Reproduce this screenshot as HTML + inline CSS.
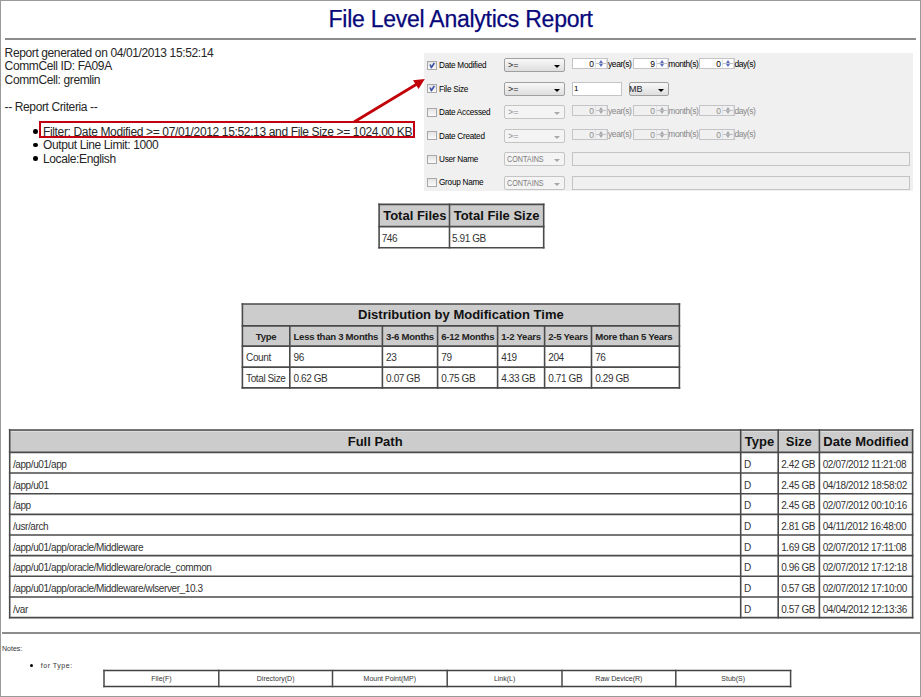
<!DOCTYPE html>
<html><head><meta charset="utf-8">
<style>
*{margin:0;padding:0;box-sizing:border-box}
html,body{width:921px;height:697px;overflow:hidden;background:#fff}
body{position:relative;font-family:"Liberation Sans",sans-serif;color:#1a1a1a}
.a{position:absolute;white-space:nowrap}
#frame{position:absolute;left:0;top:0;width:921px;height:697px;border:1px solid #9a9a9a}
#title{left:328.5px;top:6px;font-size:23px;line-height:26px;letter-spacing:-0.25px;color:#08087a;-webkit-text-stroke:0.25px #08087a}
.hr{position:absolute;background:#8c8c8c;height:2px}
.t12{font-size:12px;line-height:14px;letter-spacing:-0.38px;color:#262626}
.bul{position:absolute;width:5px;height:5px;border-radius:50%;background:#000}
#redbox{position:absolute;left:39px;top:121px;width:376px;height:17px;border:2px solid #c20010}
#panel{position:absolute;left:424px;top:53px;width:489px;height:138px;background:#f0f0f0}
.cb{position:absolute;width:10px;height:9px;border:1px solid #a8a8a8;background:linear-gradient(#e4e4e4,#fafafa)}
.cb svg{position:absolute;left:0;top:0}
.lbl{position:absolute;font-size:8.2px;line-height:10px;letter-spacing:-0.25px;color:#000}
.sel{position:absolute;width:61px;height:14px;border:1px solid #a0a0a0;border-radius:2px;background:linear-gradient(#f8f8f8 0%,#eeeeee 40%,#dedede 100%);font-size:8px;line-height:12px;padding-left:3px;letter-spacing:-0.3px;color:#222}
.sel.dis{background:#f4f4f4;border-color:#c4c4c4;color:#8c8c8c}
.arr{position:absolute;right:4px;top:6px;width:0;height:0;border-left:3px solid transparent;border-right:3px solid transparent;border-top:3px solid #000}
.dis .arr{border-top-color:#a8a8a8;top:6px;border-left-width:3px;border-right-width:3px;border-top-width:3px}
.spin{position:absolute;width:36px;height:11px;border:1px solid #c4c4c8;background:#fff;font-size:8.5px;line-height:10px;text-align:right;padding-right:13px;color:#000}
.spin.dis{background:#f0f0f0;color:#8c8c8c}
.spin i{position:absolute;right:0;top:0;width:12px;height:9px;border-left:1px solid #e2e2e2;border-right:1px solid #e2e2e2}
.spin i b{position:absolute;left:0;right:0;top:4px;height:1px;background:#c0c0c8}
.spin i:before{content:"";position:absolute;left:2.5px;top:1px;border-left:2.5px solid transparent;border-right:2.5px solid transparent;border-bottom:3px solid #5a6cc0}
.spin i:after{content:"";position:absolute;left:2.5px;top:5px;border-left:2.5px solid transparent;border-right:2.5px solid transparent;border-top:3px solid #5a6cc0}
.spin.dis i:before{border-bottom-color:#a8a8a8}
.spin.dis i:after{border-top-color:#a8a8a8}
.unit{position:absolute;font-size:8.5px;line-height:10px;letter-spacing:-0.42px;color:#000}
.unit.dis{color:#888}
.inp{position:absolute;border:1px solid #c4c4c8;background:#fff;font-size:8px;line-height:12px;padding-left:3px;color:#000}
.inp.dis{background:#f0f0f0}
.hb13{font-size:13px;font-weight:bold;line-height:20px;margin-top:-14px;color:#111}
.hb10{font-size:9.6px;font-weight:bold;line-height:20px;margin-top:-13px;letter-spacing:-0.28px;color:#222}
.b10{font-size:10px;line-height:20px;margin-top:-13px;letter-spacing:-0.4px;color:#333}
.n7{font-size:7px;line-height:20px;margin-top:-12px;color:#333}
.op{font-size:9px;letter-spacing:0}
.cont{display:inline-block;margin-left:-1px;font-size:9px;letter-spacing:0;transform:scaleX(0.8);transform-origin:0 50%;color:#7c7c7c}
</style></head><body>
<div id="frame"></div>
<div class="a" id="title">File Level Analytics Report</div>
<div class="hr" style="left:5px;top:38px;width:911px"></div>
<div class="a t12" style="left:4.6px;top:46px">Report generated on 04/01/2013 15:52:14</div>
<div class="a t12" style="left:4.6px;top:59px">CommCell ID: FA09A</div>
<div class="a t12" style="left:4.6px;top:73px">CommCell: gremlin</div>
<div class="a t12" style="left:4.6px;top:100px">-- Report Criteria --</div>
<div class="bul" style="left:33.2px;top:129.2px;width:4.6px;height:4.6px"></div>
<div class="bul" style="left:33.2px;top:142.6px;width:4.6px;height:4.6px"></div>
<div class="bul" style="left:33.2px;top:156.2px;width:4.6px;height:4.6px"></div>
<div class="a t12" style="left:43px;top:125px;letter-spacing:-0.35px">Filter: Date Modified &gt;= 07/01/2012 15:52:13 and File Size &gt;= 1024.00 KB</div>
<div class="a t12" style="left:43px;top:138px">Output Line Limit: 1000</div>
<div class="a t12" style="left:43px;top:152px">Locale:English</div>
<div id="redbox"></div>
<div id="panel"></div>
<div class="cb" style="left:427px;top:60.9px"><svg width="10" height="9"><path d="M2.1 2.5 L3.4 5.6 L6.3 1.0" fill="none" stroke="#3c50a8" stroke-width="1.6" stroke-linejoin="round"/></svg></div>
<div class="lbl" style="left:439px;top:61.1px">Date Modified</div>
<div class="sel" style="left:504px;top:58.3px"><span class="op">&gt;=</span><span class="arr"></span></div>
<div class="spin" style="left:572px;top:58.3px">0<i><b></b></i></div>
<div class="unit" style="left:608px;top:58.8px">year(s)</div>
<div class="spin" style="left:633px;top:58.3px">9<i><b></b></i></div>
<div class="unit" style="left:668.3px;top:58.8px">month(s)</div>
<div class="spin" style="left:699px;top:58.3px">0<i><b></b></i></div>
<div class="unit" style="left:734.4px;top:58.8px">day(s)</div>
<div class="cb" style="left:427px;top:84.4px"><svg width="10" height="9"><path d="M2.1 2.5 L3.4 5.6 L6.3 1.0" fill="none" stroke="#3c50a8" stroke-width="1.6" stroke-linejoin="round"/></svg></div>
<div class="lbl" style="left:439px;top:84.6px">File Size</div>
<div class="sel" style="left:504px;top:81.8px"><span class="op">&gt;=</span><span class="arr"></span></div>
<div class="inp" style="left:572px;top:81.8px;width:50px;height:14px;padding-left:1px">1</div>
<div class="sel" style="left:629px;top:81.8px;width:40px;padding-left:0;text-indent:-1px"><span class="op">MB</span><span class="arr"></span></div>
<div class="cb" style="left:427px;top:107.8px"></div>
<div class="lbl" style="left:439px;top:108.0px">Date Accessed</div>
<div class="sel dis" style="left:504px;top:105.2px"><span class="op">&gt;=</span><span class="arr"></span></div>
<div class="spin dis" style="left:572px;top:105.2px">0<i><b></b></i></div>
<div class="unit dis" style="left:608px;top:105.7px">year(s)</div>
<div class="spin dis" style="left:633px;top:105.2px">0<i><b></b></i></div>
<div class="unit dis" style="left:668.3px;top:105.7px">month(s)</div>
<div class="spin dis" style="left:699px;top:105.2px">0<i><b></b></i></div>
<div class="unit dis" style="left:734.4px;top:105.7px">day(s)</div>
<div class="cb" style="left:427px;top:131.3px"></div>
<div class="lbl" style="left:439px;top:131.5px">Date Created</div>
<div class="sel dis" style="left:504px;top:128.7px"><span class="op">&gt;=</span><span class="arr"></span></div>
<div class="spin dis" style="left:572px;top:128.7px">0<i><b></b></i></div>
<div class="unit dis" style="left:608px;top:129.2px">year(s)</div>
<div class="spin dis" style="left:633px;top:128.7px">0<i><b></b></i></div>
<div class="unit dis" style="left:668.3px;top:129.2px">month(s)</div>
<div class="spin dis" style="left:699px;top:128.7px">0<i><b></b></i></div>
<div class="unit dis" style="left:734.4px;top:129.2px">day(s)</div>
<div class="cb" style="left:427px;top:154.7px"></div>
<div class="lbl" style="left:439px;top:154.9px">User Name</div>
<div class="sel dis" style="left:504px;top:152.1px"><span class="cont">CONTAINS</span><span class="arr"></span></div>
<div class="inp dis" style="left:572px;top:152.1px;width:338px;height:14px"></div>
<div class="cb" style="left:427px;top:178.2px"></div>
<div class="lbl" style="left:439px;top:178.4px">Group Name</div>
<div class="sel dis" style="left:504px;top:175.6px"><span class="cont">CONTAINS</span><span class="arr"></span></div>
<div class="inp dis" style="left:572px;top:175.6px;width:338px;height:14px"></div>
<svg class="a" style="left:0;top:0" width="921" height="697">
<line x1="354" y1="122" x2="417" y2="84" stroke="#c20008" stroke-width="2.7"/>
<polygon points="424.8,79 413,80.2 418.6,89" fill="#c20008"/>
</svg>
<svg class="a" style="left:0;top:0" width="921" height="697"><rect x="379.10" y="204.40" width="164.60" height="22.20" fill="#cccccc"/><line x1="378.30" y1="204.40" x2="544.50" y2="204.40" stroke="#4a4a4a" stroke-width="1.6"/><line x1="378.30" y1="226.60" x2="544.50" y2="226.60" stroke="#4a4a4a" stroke-width="1.6"/><line x1="378.30" y1="247.70" x2="544.50" y2="247.70" stroke="#4a4a4a" stroke-width="1.6"/><line x1="379.10" y1="203.60" x2="379.10" y2="248.50" stroke="#4a4a4a" stroke-width="1.6"/><line x1="449.50" y1="203.60" x2="449.50" y2="248.50" stroke="#4a4a4a" stroke-width="1.6"/><line x1="543.70" y1="203.60" x2="543.70" y2="248.50" stroke="#4a4a4a" stroke-width="1.6"/><rect x="242.40" y="304.00" width="437.00" height="42.10" fill="#cccccc"/><line x1="241.60" y1="304.00" x2="680.20" y2="304.00" stroke="#4a4a4a" stroke-width="1.6"/><line x1="241.60" y1="325.90" x2="680.20" y2="325.90" stroke="#4a4a4a" stroke-width="1.6"/><line x1="241.60" y1="346.10" x2="680.20" y2="346.10" stroke="#4a4a4a" stroke-width="1.6"/><line x1="241.60" y1="367.10" x2="680.20" y2="367.10" stroke="#4a4a4a" stroke-width="1.6"/><line x1="241.60" y1="387.90" x2="680.20" y2="387.90" stroke="#4a4a4a" stroke-width="1.6"/><line x1="242.40" y1="303.20" x2="242.40" y2="388.70" stroke="#4a4a4a" stroke-width="1.6"/><line x1="679.40" y1="303.20" x2="679.40" y2="388.70" stroke="#4a4a4a" stroke-width="1.6"/><line x1="289.80" y1="325.10" x2="289.80" y2="388.70" stroke="#4a4a4a" stroke-width="1.6"/><line x1="382.40" y1="325.10" x2="382.40" y2="388.70" stroke="#4a4a4a" stroke-width="1.6"/><line x1="437.60" y1="325.10" x2="437.60" y2="388.70" stroke="#4a4a4a" stroke-width="1.6"/><line x1="497.60" y1="325.10" x2="497.60" y2="388.70" stroke="#4a4a4a" stroke-width="1.6"/><line x1="544.60" y1="325.10" x2="544.60" y2="388.70" stroke="#4a4a4a" stroke-width="1.6"/><line x1="591.50" y1="325.10" x2="591.50" y2="388.70" stroke="#4a4a4a" stroke-width="1.6"/><rect x="9.70" y="430.00" width="902.90" height="22.40" fill="#cccccc"/><rect x="9.70" y="431.00" width="902.90" height="1" fill="#dcdcdc"/><line x1="8.90" y1="430.00" x2="913.40" y2="430.00" stroke="#4a4a4a" stroke-width="1.6"/><line x1="8.90" y1="452.40" x2="913.40" y2="452.40" stroke="#4a4a4a" stroke-width="1.6"/><line x1="8.90" y1="473.05" x2="913.40" y2="473.05" stroke="#4a4a4a" stroke-width="1.6"/><line x1="8.90" y1="493.70" x2="913.40" y2="493.70" stroke="#4a4a4a" stroke-width="1.6"/><line x1="8.90" y1="514.35" x2="913.40" y2="514.35" stroke="#4a4a4a" stroke-width="1.6"/><line x1="8.90" y1="535.00" x2="913.40" y2="535.00" stroke="#4a4a4a" stroke-width="1.6"/><line x1="8.90" y1="555.65" x2="913.40" y2="555.65" stroke="#4a4a4a" stroke-width="1.6"/><line x1="8.90" y1="576.30" x2="913.40" y2="576.30" stroke="#4a4a4a" stroke-width="1.6"/><line x1="8.90" y1="596.95" x2="913.40" y2="596.95" stroke="#4a4a4a" stroke-width="1.6"/><line x1="8.90" y1="617.60" x2="913.40" y2="617.60" stroke="#4a4a4a" stroke-width="1.6"/><line x1="9.70" y1="429.20" x2="9.70" y2="618.40" stroke="#4a4a4a" stroke-width="1.6"/><line x1="740.70" y1="429.20" x2="740.70" y2="618.40" stroke="#4a4a4a" stroke-width="1.6"/><line x1="778.20" y1="429.20" x2="778.20" y2="618.40" stroke="#4a4a4a" stroke-width="1.6"/><line x1="819.40" y1="429.20" x2="819.40" y2="618.40" stroke="#4a4a4a" stroke-width="1.6"/><line x1="912.60" y1="429.20" x2="912.60" y2="618.40" stroke="#4a4a4a" stroke-width="1.6"/><line x1="103.25" y1="670.60" x2="791.35" y2="670.60" stroke="#404040" stroke-width="1.5"/><line x1="103.25" y1="686.60" x2="791.35" y2="686.60" stroke="#404040" stroke-width="1.5"/><line x1="104.00" y1="669.85" x2="104.00" y2="687.35" stroke="#484848" stroke-width="1.5"/><line x1="218.80" y1="669.85" x2="218.80" y2="687.35" stroke="#484848" stroke-width="1.5"/><line x1="332.50" y1="669.85" x2="332.50" y2="687.35" stroke="#484848" stroke-width="1.5"/><line x1="447.20" y1="669.85" x2="447.20" y2="687.35" stroke="#484848" stroke-width="1.5"/><line x1="562.00" y1="669.85" x2="562.00" y2="687.35" stroke="#484848" stroke-width="1.5"/><line x1="675.80" y1="669.85" x2="675.80" y2="687.35" stroke="#484848" stroke-width="1.5"/><line x1="790.60" y1="669.85" x2="790.60" y2="687.35" stroke="#484848" stroke-width="1.5"/></svg>
<div class="a hb13" style="left:383.2px;top:219.9px">Total Files</div>
<div class="a hb13" style="left:453.7px;top:219.9px">Total File Size</div>
<div class="a b10" style="left:381.7px;top:242.2px">746</div>
<div class="a b10" style="left:452.0px;top:242.2px">5.91 GB</div>
<div class="a hb13" style="left:242.4px;width:437.0px;top:319.0px;text-align:center">Distribution by Modification Time</div>
<div class="a hb10" style="left:242.4px;width:47.4px;top:339.7px;text-align:center">Type</div>
<div class="a hb10" style="left:293.5px;top:339.7px">Less than 3 Months</div>
<div class="a hb10" style="left:386.1px;top:339.7px">3-6 Months</div>
<div class="a hb10" style="left:441.3px;top:339.7px">6-12 Months</div>
<div class="a hb10" style="left:501.3px;top:339.7px">1-2 Years</div>
<div class="a hb10" style="left:548.3px;top:339.7px">2-5 Years</div>
<div class="a hb10" style="left:595.2px;top:339.7px">More than 5 Years</div>
<div class="a b10" style="left:246.1px;top:360.7px">Count</div>
<div class="a b10" style="left:246.1px;top:381.7px">Total Size</div>
<div class="a b10" style="left:293.5px;top:360.7px">96</div>
<div class="a b10" style="left:293.5px;top:381.7px">0.62 GB</div>
<div class="a b10" style="left:386.1px;top:360.7px">23</div>
<div class="a b10" style="left:386.1px;top:381.7px">0.07 GB</div>
<div class="a b10" style="left:441.3px;top:360.7px">79</div>
<div class="a b10" style="left:441.3px;top:381.7px">0.75 GB</div>
<div class="a b10" style="left:501.3px;top:360.7px">419</div>
<div class="a b10" style="left:501.3px;top:381.7px">4.33 GB</div>
<div class="a b10" style="left:548.3px;top:360.7px">204</div>
<div class="a b10" style="left:548.3px;top:381.7px">0.71 GB</div>
<div class="a b10" style="left:595.2px;top:360.7px">76</div>
<div class="a b10" style="left:595.2px;top:381.7px">0.29 GB</div>
<div class="a hb13" style="left:9.7px;width:731.0px;top:446.2px;text-align:center">Full Path</div>
<div class="a hb13" style="left:740.7px;width:37.5px;top:446.2px;text-align:center">Type</div>
<div class="a hb13" style="left:778.2px;width:41.2px;top:446.2px;text-align:center">Size</div>
<div class="a hb13" style="left:819.4px;width:93.2px;top:446.2px;text-align:center">Date Modified</div>
<div class="a b10" style="left:12.9px;top:468.0px">/app/u01/app</div>
<div class="a b10" style="left:744.1px;top:468.0px">D</div>
<div class="a b10" style="left:781.2px;top:468.0px">2.42 GB</div>
<div class="a b10" style="left:822.7px;top:468.0px">02/07/2012 11:21:08</div>
<div class="a b10" style="left:12.9px;top:488.6px">/app/u01</div>
<div class="a b10" style="left:744.1px;top:488.6px">D</div>
<div class="a b10" style="left:781.2px;top:488.6px">2.45 GB</div>
<div class="a b10" style="left:822.7px;top:488.6px">04/18/2012 18:58:02</div>
<div class="a b10" style="left:12.9px;top:509.3px">/app</div>
<div class="a b10" style="left:744.1px;top:509.3px">D</div>
<div class="a b10" style="left:781.2px;top:509.3px">2.45 GB</div>
<div class="a b10" style="left:822.7px;top:509.3px">02/07/2012 00:10:16</div>
<div class="a b10" style="left:12.9px;top:530.0px">/usr/arch</div>
<div class="a b10" style="left:744.1px;top:530.0px">D</div>
<div class="a b10" style="left:781.2px;top:530.0px">2.81 GB</div>
<div class="a b10" style="left:822.7px;top:530.0px">04/11/2012 16:48:00</div>
<div class="a b10" style="left:12.9px;top:550.6px">/app/u01/app/oracle/Middleware</div>
<div class="a b10" style="left:744.1px;top:550.6px">D</div>
<div class="a b10" style="left:781.2px;top:550.6px">1.69 GB</div>
<div class="a b10" style="left:822.7px;top:550.6px">02/07/2012 17:11:08</div>
<div class="a b10" style="left:12.9px;top:571.2px">/app/u01/app/oracle/Middleware/oracle_common</div>
<div class="a b10" style="left:744.1px;top:571.2px">D</div>
<div class="a b10" style="left:781.2px;top:571.2px">0.96 GB</div>
<div class="a b10" style="left:822.7px;top:571.2px">02/07/2012 17:12:18</div>
<div class="a b10" style="left:12.9px;top:591.9px">/app/u01/app/oracle/Middleware/wlserver_10.3</div>
<div class="a b10" style="left:744.1px;top:591.9px">D</div>
<div class="a b10" style="left:781.2px;top:591.9px">0.57 GB</div>
<div class="a b10" style="left:822.7px;top:591.9px">02/07/2012 17:10:00</div>
<div class="a b10" style="left:12.9px;top:612.5px">/var</div>
<div class="a b10" style="left:744.1px;top:612.5px">D</div>
<div class="a b10" style="left:781.2px;top:612.5px">0.57 GB</div>
<div class="a b10" style="left:822.7px;top:612.5px">04/04/2012 12:13:36</div>
<div class="hr" style="left:2px;top:632px;width:918px"></div>
<div class="a n7" style="left:2.0px;top:651.2px">Notes:</div>
<div class="bul" style="left:29.5px;top:663.5px;width:3.5px;height:3.5px"></div>
<div class="a n7" style="left:40.7px;top:667.5px;letter-spacing:0.55px">for Type:</div>
<div class="a n7" style="left:104.0px;width:114.8px;top:681.3px;text-align:center">File(F)</div>
<div class="a n7" style="left:218.8px;width:113.7px;top:681.3px;text-align:center">Directory(D)</div>
<div class="a n7" style="left:332.5px;width:114.7px;top:681.3px;text-align:center">Mount Point(MP)</div>
<div class="a n7" style="left:447.2px;width:114.8px;top:681.3px;text-align:center">Link(L)</div>
<div class="a n7" style="left:562.0px;width:113.8px;top:681.3px;text-align:center">Raw Device(R)</div>
<div class="a n7" style="left:675.8px;width:114.8px;top:681.3px;text-align:center">Stub(S)</div>
</body></html>
